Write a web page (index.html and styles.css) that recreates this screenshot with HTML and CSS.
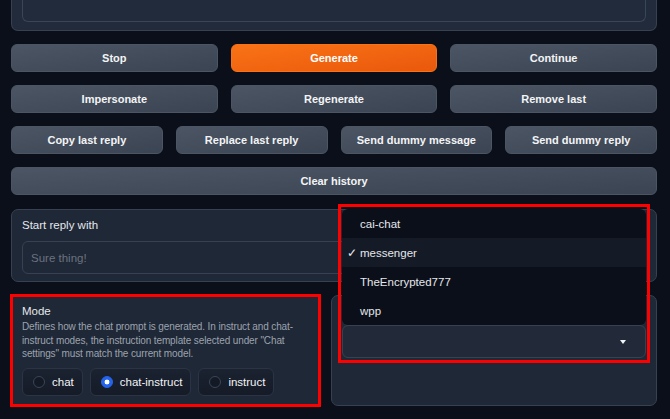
FILE: index.html
```html
<!DOCTYPE html>
<html>
<head>
<meta charset="utf-8">
<link rel="stylesheet" href="styles.css">
</head>
<body>
<div class="page">
  <div class="top-panel"><div class="top-inner"></div></div>

  <div class="btn-row cols3">
    <button class="btn">Stop</button>
    <button class="btn primary">Generate</button>
    <button class="btn">Continue</button>
  </div>
  <div class="btn-row cols3">
    <button class="btn">Impersonate</button>
    <button class="btn">Regenerate</button>
    <button class="btn">Remove last</button>
  </div>
  <div class="btn-row cols4">
    <button class="btn">Copy last reply</button>
    <button class="btn">Replace last reply</button>
    <button class="btn">Send dummy message</button>
    <button class="btn">Send dummy reply</button>
  </div>
  <div class="btn-row">
    <button class="btn">Clear history</button>
  </div>

  <div class="panel start-panel">
    <div class="label">Start reply with</div>
    <div class="textbox"><span class="placeholder">Sure thing!</span></div>
  </div>

  <div class="lower">
    <div class="panel mode-panel">
      <div class="label">Mode</div>
      <div class="info">Defines how the chat prompt is generated. In instruct and chat-instruct modes, the instruction template selected under "Chat settings" must match the current model.</div>
      <div class="radios">
        <label class="radio"><span class="dot"></span>chat</label>
        <label class="radio"><span class="dot on"></span>chat-instruct</label>
        <label class="radio"><span class="dot"></span>instruct</label>
      </div>
    </div>
    <div class="panel style-panel">
      <div class="dd">
        <ul class="dd-menu">
          <li>cai-chat</li>
          <li class="sel"><span class="check">✓</span>messenger</li>
          <li>TheEncrypted777</li>
          <li>wpp</li>
        </ul>
        <div class="select"><span class="caret"></span></div>
        <div class="dd-mark"></div>
      </div>
    </div>
  </div>
</div>
</body>
</html>
```

FILE: styles.css
```css
* { box-sizing: border-box; }
html, body { margin: 0; padding: 0; }
body {
  background: #0b0f19;
  font-family: "Liberation Sans", Arial, sans-serif;
  color: #e5e7eb;
  width: 670px;
  height: 419px;
  overflow: hidden;
}
.page {
  padding: 0 13px 0 11px;
  display: flex;
  flex-direction: column;
}
.top-panel {
  height: 31px;
  background: #222b3b;
  border: 1px solid #374151;
  border-top: none;
  border-radius: 0 0 7px 7px;
  padding: 0 10px 8px 10px;
}
.top-inner {
  height: 100%;
  border: 1px solid #3a4556;
  border-top: none;
  border-radius: 0 0 6px 6px;
  background: #222b3b;
}
.btn-row {
  display: grid;
  grid-template-columns: 1fr;
  gap: 13px;
  margin-top: 13px;
}
.cols3 { grid-template-columns: repeat(3, 1fr); }
.cols4 { grid-template-columns: repeat(4, 1fr); }
.btn {
  height: 28px;
  border: 1px solid #4b5563;
  border-radius: 6px;
  background: linear-gradient(to bottom right, #4b5563, #3b4452);
  color: #f3f4f6;
  font-family: "Liberation Sans", Arial, sans-serif;
  font-weight: bold;
  font-size: 11px;
  padding: 0;
}
.btn.primary {
  background: linear-gradient(to bottom right, #f97316, #ea580c);
  border-color: #f97316;
  color: #fff;
}
.panel {
  background: #1f2836;
  border: 1px solid #374151;
  border-radius: 7px;
}
.label {
  font-size: 11.5px;
  color: #e5e7eb;
}
.start-panel {
  margin-top: 14px;
  height: 73px;
  padding: 9px 10px 0 10px;
}
.textbox {
  margin-top: 10px;
  height: 33px;
  border: 1px solid #374151;
  border-radius: 6px;
  background: #1f2836;
  padding: 0 8px;
  display: flex;
  align-items: center;
}
.placeholder { color: #6b7280; font-size: 11.5px; }
.lower {
  margin-top: 13px;
  display: grid;
  grid-template-columns: 309px 1fr;
  gap: 11px;
  height: 111px;
}
.mode-panel {
  padding: 9px 10px 0 10px;
  outline: 3px solid #ff0000;
  outline-offset: -2px;
  border-radius: 0;
}
.info {
  margin-top: 3px;
  font-size: 10px;
  letter-spacing: -0.12px;
  line-height: 13.5px;
  color: #9ca3af;
}
.radios {
  display: flex;
  gap: 7px;
  margin-top: 7px;
}
.radio {
  height: 28px;
  display: flex;
  align-items: center;
  gap: 7px;
  padding: 0 8px 0 10px;
  border: 1px solid #2b3445;
  border-radius: 6px;
  background: linear-gradient(to bottom, #1b2230, #151b27);
  font-size: 11.5px;
  color: #f3f4f6;
}
.dot {
  width: 12px;
  height: 12px;
  border-radius: 50%;
  border: 1px solid #3b4556;
  background: #141a25;
}
.dot.on {
  background: #2563eb radial-gradient(circle, #fff 0 2.2px, transparent 2.7px);
  border-color: #2563eb;
}
.style-panel {
  padding: 29px 10px 0 10px;
}
.dd {
  position: relative;
}
.select {
  height: 33px;
  border: 1px solid #374151;
  border-radius: 6px;
  background: #222a39;
  position: relative;
}
.caret {
  position: absolute;
  right: 19px;
  top: 14px;
  width: 0;
  height: 0;
  border-left: 3.5px solid transparent;
  border-right: 3.5px solid transparent;
  border-top: 4px solid #f3f4f6;
}
.dd-menu {
  position: absolute;
  bottom: 100%;
  left: 0;
  right: 0;
  margin: 0;
  padding: 0;
  list-style: none;
  background: #0b0f19;
  border-radius: 6px;
  overflow: hidden;
  z-index: 2;
}
.dd-menu li {
  height: 29px;
  display: flex;
  align-items: center;
  padding-left: 18px;
  font-size: 11.5px;
  color: #e5e7eb;
  position: relative;
}
.dd-menu li.sel { background: #141a26; }
.check {
  position: absolute;
  left: 5px;
  font-size: 12px;
}
.dd-mark {
  position: absolute;
  top: -121px;
  left: -4px;
  right: -4px;
  bottom: -5px;
  border: 3px solid #ff0000;
  z-index: 3;
}
```
